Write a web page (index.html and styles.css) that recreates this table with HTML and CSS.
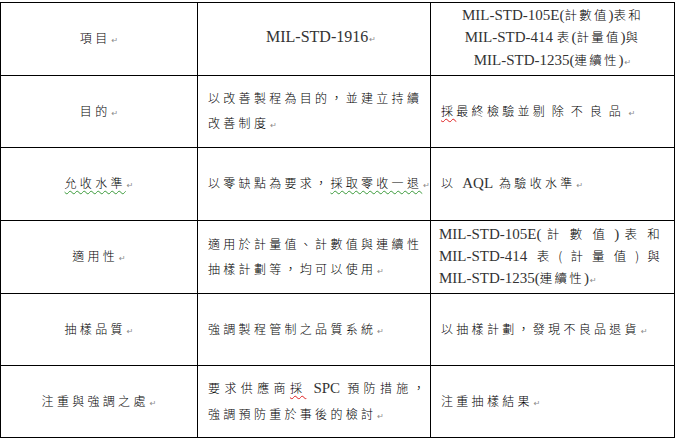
FILE: index.html
```html
<!DOCTYPE html>
<html lang="zh-Hant">
<head>
<meta charset="utf-8">
<title>MIL-STD 比較</title>
<link rel="stylesheet" href="styles.css">
</head>
<body>
<div class="frame">
<table class="grid">
  <colgroup>
    <col class="c1"><col class="c2"><col class="c3">
  </colgroup>
  <tr class="r1">
    <td class="head">項目<span class="pm">↵</span></td>
    <td class="center en-cell big">MIL-STD-1916<span class="pm">↵</span></td>
    <td class="center en-cell mixed">
      <div>MIL-STD-105E(<span class="zh">計數值</span>)<span class="zh">表和</span></div>
      <div>MIL-STD-414 <span class="zh">表</span>(<span class="zh">計量值</span>)<span class="zh">與</span></div>
      <div>MIL-STD-1235(<span class="zh">連續性</span>)<span class="pm">↵</span></div>
    </td>
  </tr>
  <tr class="r2">
    <td class="head">目的<span class="pm">↵</span></td>
    <td class="text">以改善製程為目的，並建立持續<br>改善制度<span class="pm">↵</span></td>
    <td class="text"><span class="red">採</span>最終檢驗並<span class="wide">剔除不良品</span><span class="pm">↵</span></td>
  </tr>
  <tr class="r3">
    <td class="head"><span class="green">允收水準</span><span class="pm">↵</span></td>
    <td class="text nowrap">以零缺點為要求，<span class="green">採取零收一退</span><span class="pm">↵</span></td>
    <td class="text">以 <span class="en">AQL</span> 為驗收水準<span class="pm">↵</span></td>
  </tr>
  <tr class="r4">
    <td class="head">適用性<span class="pm">↵</span></td>
    <td class="text">適用於計量值、計數值與連續性<br>抽樣計劃等，均可以使用<span class="pm">↵</span></td>
    <td class="text en-cell mixed just">
      <div class="jl">MIL-STD-105E( <span class="zh">計 數 值</span> ) <span class="zh">表 和</span></div>
      <div class="jl">MIL-STD-414 &nbsp;<span class="zh">表 ( 計 量 值 ) 與</span></div>
      <div>MIL-STD-1235(<span class="zh">連續性</span>)<span class="pm">↵</span></div>
    </td>
  </tr>
  <tr class="r5">
    <td class="head">抽樣品質<span class="pm">↵</span></td>
    <td class="text">強調製程管制之品質系統<span class="pm">↵</span></td>
    <td class="text">以抽樣計劃，發現不良品退貨<span class="pm">↵</span></td>
  </tr>
  <tr class="r6">
    <td class="head">注重與強調之處<span class="pm">↵</span></td>
    <td class="text">
      <div class="jl tight">要求供應商<span class="red">採</span> <span class="en">SPC</span> 預防措施，</div>
      <div>強調預防重於事後的檢討<span class="pm">↵</span></div>
    </td>
    <td class="text">注重抽樣結果<span class="pm">↵</span></td>
  </tr>
</table>
</div>
</body>
</html>
```
FILE: styles.css
```css
html, body {
  margin: 0;
  padding: 0;
  background: #fff;
}

body {
  color: #111;
  font-family: "Liberation Serif", "Noto Sans CJK TC", serif;
}

.frame {
  width: 675px;
  margin-top: 2px;
  border-right: 1px solid #000;
  box-sizing: border-box;
}

.grid {
  border-collapse: collapse;
  width: 674px;
  table-layout: fixed;
}

.c1 { width: 197px; }
.c2 { width: 233px; }
.c3 { width: 244px; }

.grid td {
  border: 1px solid #000;
  padding: 0 2px 0 10px;
  vertical-align: middle;
  font-family: "Noto Sans CJK TC", sans-serif;
  font-size: 12px;
  letter-spacing: 3.3px;
  line-height: 25px;
  font-weight: 300;
  color: #000;
}

.r1 { height: 73px; }
.r2 { height: 72px; }
.r3 { height: 73px; }
.r4 { height: 73px; }
.r5 { height: 72px; }
.r6 { height: 72px; }

.grid td.head {
  text-align: center;
  padding: 0;
}

.grid td.center {
  text-align: center;
  padding: 0 4px;
}

.grid td.en-cell {
  font-family: "Liberation Serif", serif;
  font-size: 15px;
  letter-spacing: 0;
  line-height: 22.5px;
  font-weight: 400;
  color: #333;
}

.grid td.big {
  font-size: 16px;
  padding: 0 0 0 14px;
}

.grid td.text {
  text-align: left;
}

.grid td.just {
  padding: 0 8px 0 8px;
  line-height: 22px;
}

.jl {
  text-align: justify;
  text-align-last: justify;
  padding-right: 4px;
}

.jl.tight {
  padding-right: 0;
}

.nowrap {
  white-space: nowrap;
}

.zh {
  font-family: "Noto Sans CJK TC", sans-serif;
  font-size: 12.5px;
  font-weight: 300;
  letter-spacing: 2.2px;
  color: #000;
}

.en {
  font-family: "Liberation Serif", serif;
  font-size: 15px;
  font-weight: 400;
  letter-spacing: 0;
  color: #333;
}

.wide {
  letter-spacing: 7px;
}

.pm {
  font-family: "DejaVu Sans", sans-serif;
  font-size: 8px;
  color: #8a8a8a;
  letter-spacing: 0;
  font-weight: 400;
  margin-left: 1px;
}

.red {
  text-decoration: underline wavy #e02020;
  text-decoration-thickness: 1px;
  text-underline-offset: 2px;
}

.green {
  text-decoration: underline wavy #3a9a3a;
  text-decoration-thickness: 1px;
  text-underline-offset: 2px;
}
```
